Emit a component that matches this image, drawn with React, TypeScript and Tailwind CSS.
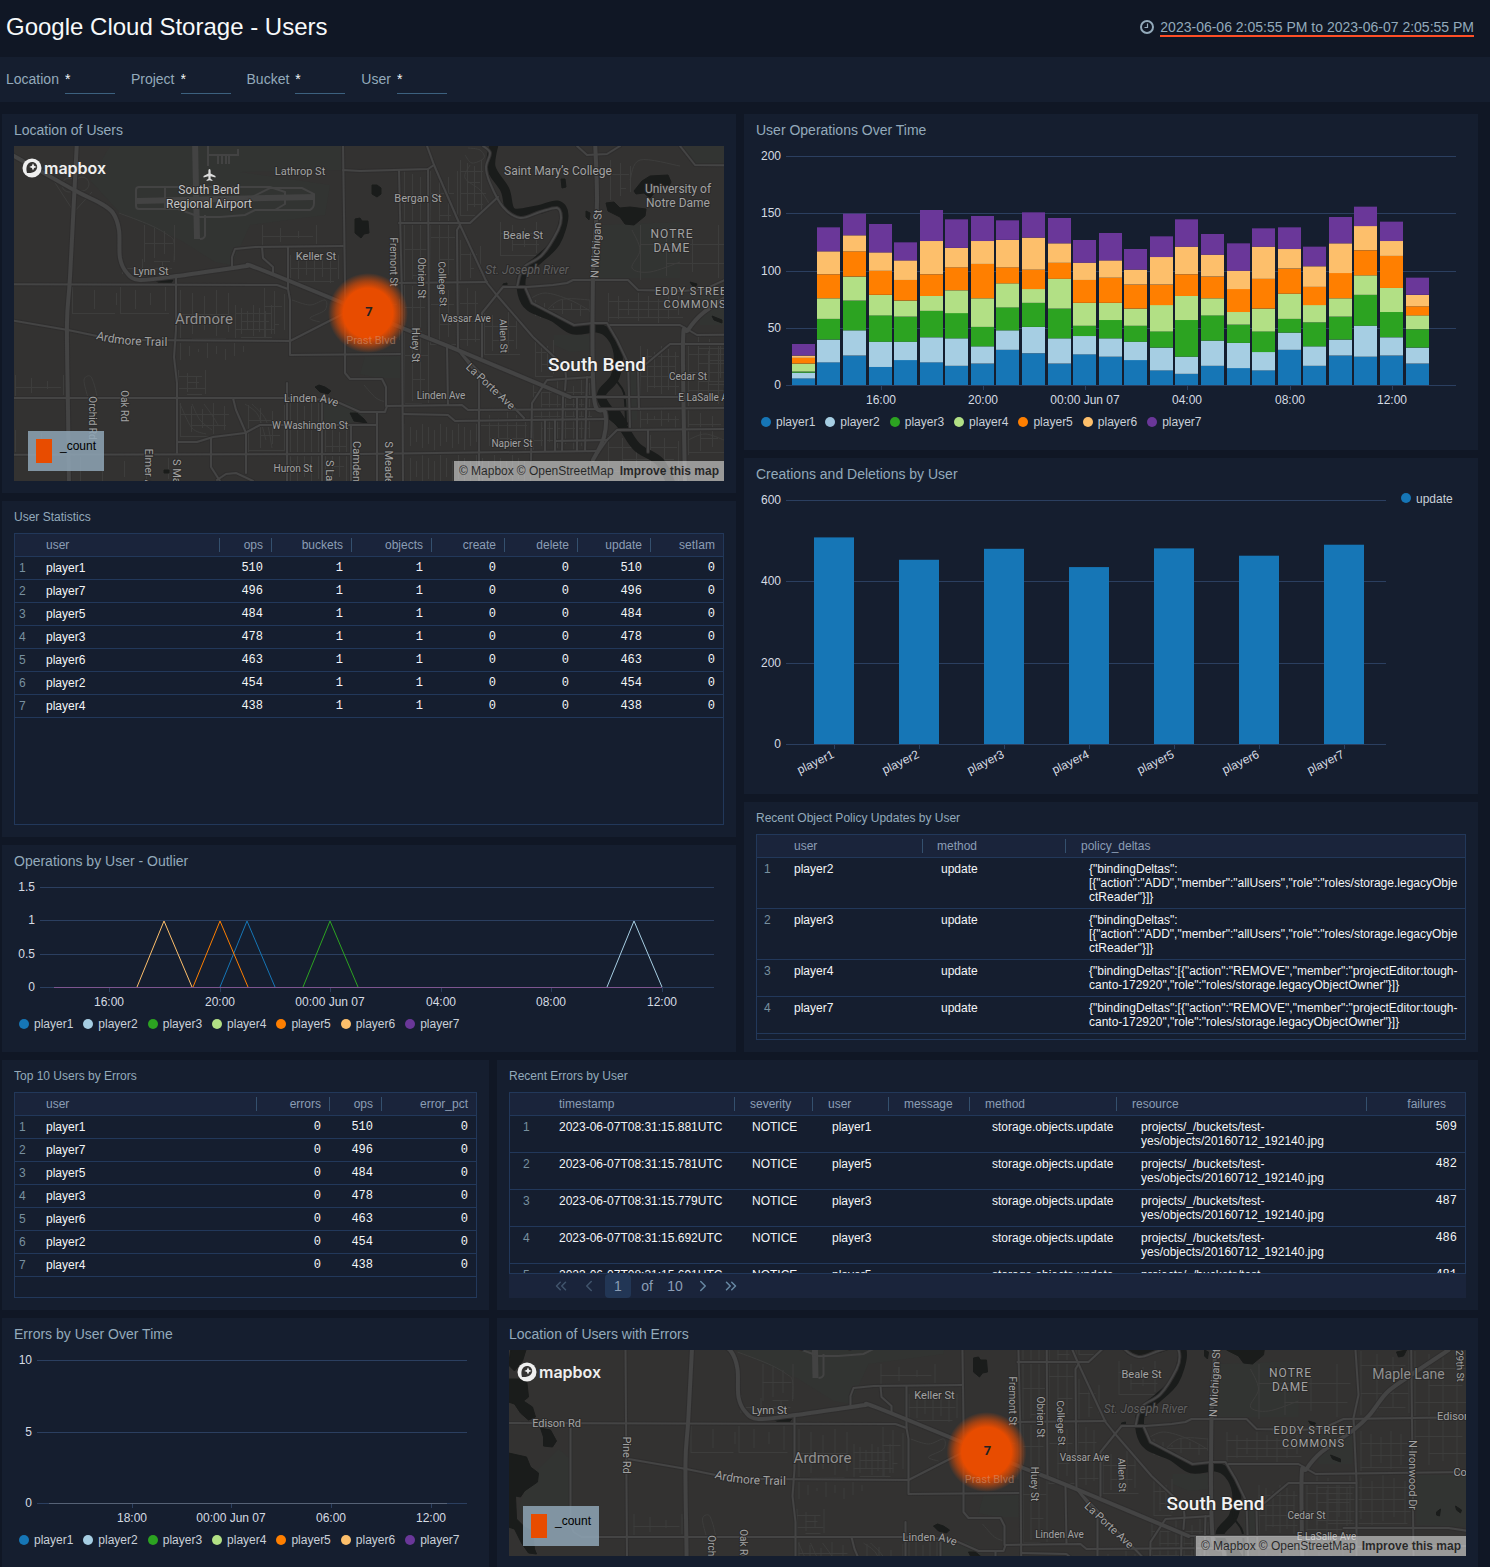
import type { ReactNode } from "react";
import { ChevronLeft, ChevronRight, ChevronsLeft, ChevronsRight } from "lucide-react";

const PLAYERS = [
  { name: "player1", color: "#1676b6" },
  { name: "player2", color: "#a6cee3" },
  { name: "player3", color: "#2ca321" },
  { name: "player4", color: "#b2e085" },
  { name: "player5", color: "#ff7f00" },
  { name: "player6", color: "#fdbf6b" },
  { name: "player7", color: "#6a3799" },
];

const GRID = "#2b3f60";
const AXIS_TEXT = "#d5dbe3";

/* ---------- shared pieces ---------- */

function Panel({ title, small, last, children }: { title: string; small?: boolean; last?: boolean; children: ReactNode }) {
  return (
    <section className={`min-w-0 bg-[#151e2f] px-3 ${last ? "pb-[11px]" : "pb-3"}`}>
      <h2 className={`truncate text-[#93aabb] ${small ? "text-xs leading-8" : "text-sm leading-8"}`}>{title}</h2>
      {children}
    </section>
  );
}

function Legend() {
  return (
    <ul className="mb-1 flex h-6 items-center gap-[10px] overflow-hidden pl-[5px] text-xs text-[#c9d0d8]">
      {PLAYERS.map((p) => (
        <li key={p.name} className="flex items-center gap-[5px]">
          <span className="size-[10px] rounded-full" style={{ backgroundColor: p.color }} />
          {p.name}
        </li>
      ))}
    </ul>
  );
}

type Column = { label: string; width?: string; head?: string; cell?: string; numeric?: boolean };

function DataTable({ columns, rows, indexWidth, indexCell, height }: {
  columns: Column[];
  rows: string[][];
  indexWidth: string;
  indexCell: string;
  height: string;
}) {
  return (
    <div className={`overflow-auto border border-[#22385a] [scrollbar-width:none] ${height}`}>
      <table className="w-full table-fixed border-separate border-spacing-0 text-xs leading-[14px]">
        <colgroup>
          <col className={indexWidth} />
          {columns.map((c) => (
            <col key={c.label} className={c.width} />
          ))}
        </colgroup>
        <thead>
          <tr className="bg-[#1a243b] text-[#8b9db5]">
            <th className="border-b border-[#22385a] py-1" aria-label="row" />
            {columns.map((c, i) => (
              <th
                key={c.label}
                scope="col"
                className={`relative border-b border-[#22385a] py-1 font-normal ${c.numeric ? "text-right" : "text-left"} ${c.head ?? "px-2"} ${
                  i < columns.length - 1 ? "after:absolute after:inset-y-1 after:right-0 after:w-px after:bg-[#34506e]" : ""
                }`}
              >
                {c.label}
              </th>
            ))}
          </tr>
        </thead>
        <tbody>
          {rows.map((r, ri) => (
            <tr key={ri} className="align-top text-[#f3f5f7]">
              <td className={`border-b border-[#22385a] py-1 text-[#78909f] ${indexCell}`}>{ri + 1}</td>
              {r.map((v, ci) => (
                <td
                  key={ci}
                  className={`border-b border-[#22385a] py-1 break-words ${
                    columns[ci].numeric ? "text-right font-['Liberation_Mono',monospace]" : ""
                  } ${columns[ci].cell ?? "px-2"}`}
                >
                  {v}
                </td>
              ))}
            </tr>
          ))}
        </tbody>
      </table>
    </div>
  );
}

/* ---------- map ---------- */

type Pt = [number, number];

const toPoints = (pts: Pt[]) => pts.map((p) => p.join(",")).join(" ");

function smooth(pts: Pt[]) {
  let d = `M${pts[0][0]},${pts[0][1]}`;
  for (let i = 0; i < pts.length - 1; i++) {
    const a = pts[Math.max(i - 1, 0)];
    const b = pts[i];
    const c = pts[i + 1];
    const e = pts[Math.min(i + 2, pts.length - 1)];
    d += `C${b[0] + (c[0] - a[0]) / 6},${b[1] + (c[1] - a[1]) / 6} ${c[0] - (e[0] - b[0]) / 6},${c[1] - (e[1] - b[1]) / 6} ${c[0]},${c[1]}`;
  }
  return d;
}

const HIGHWAYS: Pt[][] = [
  [[77, 140], [76, 160], [70, 277], [67, 323], [68, 410], [69, 485]],
  [[0, 148], [14, 156], [74, 190], [100, 203], [113, 213], [119, 230], [120, 258], [127, 273], [140, 280], [177, 276], [233, 268], [247, 266], [257, 268], [343, 303], [400, 327], [460, 351], [570, 397]],
  [[595, 140], [597, 203], [593, 277], [594, 397], [605, 412], [604, 437], [593, 460]],
  [[830, 211], [788, 239], [768, 254], [751, 276], [735, 291], [703, 313], [688, 330], [683, 343], [685, 485]],
];

const ROADS: Pt[][] = [
  [[-110, 284], [277, 285], [288, 289], [290, 300], [290, 355], [400, 354]],
  [[10, 320], [68, 330], [97, 336], [130, 340], [290, 341], [343, 314]],
  [[176, 276], [176, 330], [174, 357], [177, 383], [177, 453]],
  [[-48, 289], [-48, 385], [-45, 393], [-37, 398], [283, 398], [333, 400], [360, 412], [385, 412], [387, 406], [462, 405], [468, 410], [605, 409], [850, 407]],
  [[570, 397], [684, 397]],
  [[-110, 455], [360, 454], [598, 451]],
  [[343, 146], [345, 283], [345, 373], [350, 379], [382, 379], [386, 387], [386, 406]],
  [[343, 246], [255, 247], [235, 249], [232, 257], [232, 267]],
  [[262, 247], [263, 258], [273, 267], [273, 273]],
  [[288, 247], [288, 289]],
  [[343, 170], [360, 171], [428, 169], [434, 165]],
  [[427, 146], [434, 165], [460, 225], [487, 283], [495, 293], [533, 337], [565, 367], [566, 377], [565, 390]],
  [[399, 171], [402, 297], [403, 481]],
  [[428, 169], [429, 337]],
  [[460, 225], [457, 230], [458, 350], [479, 377], [479, 481]],
  [[399, 223], [470, 223], [498, 197]],
  [[396, 283], [487, 282]],
  [[447, 347], [448, 405]],
  [[458, 350], [524, 418]],
  [[482, 357], [482, 313], [503, 287], [527, 287], [553, 285], [567, 283], [573, 280], [628, 280], [638, 290], [683, 291], [705, 289], [725, 280], [871, 278]],
  [[403, 414], [448, 415], [455, 421], [605, 419]],
  [[577, 146], [587, 155], [607, 154], [620, 146]],
  [[680, 146], [695, 165], [850, 166]],
  [[525, 287], [532, 303], [553, 314], [574, 325], [593, 323], [607, 323], [617, 340], [628, 363], [630, 427]],
  [[610, 325], [680, 325], [697, 335], [850, 333]],
  [[737, 211], [740, 256], [735, 279], [738, 343], [738, 417]],
  [[792, 146], [795, 417]],
  [[646, 364], [670, 344], [738, 344]],
  [[725, 389], [830, 389], [850, 392]],
  [[593, 460], [607, 440], [617, 430], [724, 429]],
  [[638, 370], [639, 409]],
  [[648, 430], [648, 452]],
  [[531, 460], [532, 403], [547, 380], [593, 377]],
  [[545, 420], [545, 451]],
  [[555, 420], [555, 451]],
  [[563, 397], [562, 451]],
  [[577, 397], [577, 451]],
  [[587, 377], [585, 451]],
  [[555, 441], [607, 440]],
  [[7, 211], [9, 485]],
  [[287, 383], [287, 485]],
  [[322, 403], [322, 485]],
  [[351, 485], [351, 425]],
  [[377, 412], [377, 481]],
  [[177, 442], [197, 442], [213, 437], [245, 433], [260, 425], [377, 425]],
  [[233, 398], [236, 410], [246, 433], [246, 473]],
  [[211, 438], [211, 467], [220, 481]],
  [[217, 480], [226, 474], [236, 473], [253, 481]],
];

const BANK_ROAD: Pt[] = [[483, 146], [490, 153], [486, 167], [490, 183], [503, 207], [520, 218], [540, 212], [557, 208], [561, 217], [558, 230], [542, 255], [523, 268], [517, 287]];

const RIVER: Pt[] = [[495, 140], [491, 167], [505, 190], [512, 212], [537, 210], [557, 205], [564, 216], [556, 242], [538, 260], [523, 273], [522, 293], [530, 307], [553, 317], [573, 330], [597, 328], [610, 335], [618, 353], [615, 377], [602, 393], [605, 405], [623, 427], [637, 447], [660, 462], [672, 486]];

const LAKES: Pt[][] = [
  [[355, 219], [360, 218], [362, 221], [368, 221], [369, 233], [364, 234], [361, 238], [355, 233]],
  [[372, 185], [377, 185], [381, 188], [381, 194], [377, 197], [372, 194]],
  [[634, 191], [642, 181], [650, 176], [668, 175], [671, 182], [668, 188], [655, 192], [650, 198], [644, 193], [636, 194]],
  [[606, 203], [614, 202], [620, 208], [630, 207], [646, 209], [645, 216], [634, 225], [625, 224], [620, 217], [608, 211]],
  [[561, 179], [565, 179], [566, 187], [562, 188]],
  [[586, 211], [590, 213], [589, 220], [586, 217]],
  [[315, 387], [319, 385], [325, 387], [331, 391], [328, 394], [320, 392]],
  [[350, 413], [357, 413], [364, 419], [367, 423], [354, 421]],
  [[156, 281], [173, 280], [171, 283], [160, 283]],
  [[712, 316], [722, 320], [722, 323], [714, 320]],
  [[690, 282], [697, 284], [695, 288], [692, 285]],
  [[503, 284], [507, 283], [507, 286], [503, 286]],
  [[164, 470], [169, 470], [169, 473], [164, 473]],
  [[607, 408], [619, 410], [628, 424], [620, 428], [608, 418]],
  [[-107, 206], [-91, 206], [-96, 222], [-104, 232], [-110, 226]],
  [[-110, 240], [-92, 240], [-90, 258], [-95, 262], [-86, 268], [-83, 278], [-90, 281], [-98, 274], [-104, 265], [-110, 263]],
  [[-78, 289], [-68, 291], [-62, 302], [-66, 308], [-75, 307], [-75, 298]],
  [[-110, 314], [-92, 318], [-88, 328], [-80, 334], [-81, 343], [-94, 352], [-98, 358], [-103, 357], [-102, 380], [-94, 388], [-86, 392], [-84, 410], [-82, 415], [-90, 414], [-97, 404], [-104, 390], [-110, 388]],
  [[778, 213], [788, 211], [785, 217], [780, 218]],
  [[818, 373], [822, 370], [821, 377], [818, 376]],
  [[837, 367], [843, 371], [842, 374], [838, 371]],
];

const PARKS: Pt[][] = [
  [[110, 146], [343, 146], [343, 170], [240, 172], [330, 185], [325, 215], [250, 225], [232, 265], [215, 262], [180, 240], [120, 213], [90, 180]],
  [[600, 225], [680, 222], [680, 278], [597, 278]],
  [[680, 146], [724, 146], [724, 165], [695, 165]],
  [[554, 335], [592, 335], [592, 350], [570, 352], [554, 345]],
  [[626, 372], [637, 372], [637, 420], [626, 420]],
  [[365, 356], [400, 356], [400, 378], [378, 378], [360, 374]],
  [[-90, 340], [-60, 310], [-48, 320], [-48, 385], [-80, 395], [-100, 370]],
  [[700, 292], [734, 295], [734, 325], [700, 325]],
  [[798, 336], [850, 336], [850, 388], [798, 386]],
  [[322, 403], [350, 403], [366, 414], [350, 424], [322, 424]],
];

/* blocks of side streets: x0, y0, x1, y1, column step, row step */
const BLOCKS: [number, number, number, number, number, number][] = [
  [404, 171, 427, 283, 8, 26],
  [404, 283, 428, 405, 8, 24],
  [430, 171, 457, 283, 9, 22],
  [430, 284, 457, 345, 9, 20],
  [459, 285, 481, 350, 8, 18],
  [460, 240, 480, 282, 10, 14],
  [484, 312, 520, 355, 8, 14],
  [535, 300, 592, 316, 9, 9],
  [535, 340, 553, 376, 6, 12],
  [533, 380, 592, 450, 8, 12],
  [608, 293, 683, 323, 10, 8],
  [640, 346, 682, 396, 7, 10],
  [640, 410, 682, 428, 7, 9],
  [688, 345, 737, 406, 10, 9],
  [688, 410, 724, 455, 12, 14],
  [698, 336, 792, 386, 11, 12],
  [742, 292, 792, 332, 10, 12],
  [742, 212, 790, 276, 16, 14],
  [796, 212, 850, 330, 14, 17],
  [404, 424, 478, 450, 6, 40],
  [404, 455, 530, 485, 6, 40],
  [480, 412, 530, 450, 9, 13],
  [290, 400, 320, 485, 7, 27],
  [325, 426, 350, 485, 7, 20],
  [248, 405, 286, 452, 12, 15],
  [178, 370, 205, 396, 9, 6],
  [180, 403, 232, 436, 11, 11],
  [120, 287, 172, 313, 15, 26],
  [72, 287, 118, 313, 22, 26],
  [180, 290, 232, 338, 12, 24],
  [235, 305, 275, 338, 6, 8],
  [264, 288, 285, 338, 10, 18],
  [290, 255, 340, 283, 8, 13],
  [262, 225, 316, 246, 18, 11],
  [144, 225, 176, 262, 10, 18],
  [122, 256, 175, 274, 20, 12],
  [15, 375, 64, 397, 16, 12],
  [180, 343, 250, 360, 9, 18],
  [349, 293, 400, 340, 10, 11],
  [80, 455, 176, 485, 22, 40],
  [608, 435, 680, 485, 14, 12],
  [460, 160, 486, 215, 7, 11],
  [500, 222, 545, 255, 12, 11],
  [610, 160, 632, 200, 10, 14],
  [640, 225, 735, 280, 26, 19],
  [15, 430, 66, 452, 26, 30],
];

const TWISTS: Pt[][] = [
  [[119, 213], [150, 225], [168, 235], [174, 242], [174, 262]],
  [[465, 155], [472, 163], [484, 158], [480, 150], [468, 148]],
  [[470, 165], [465, 178], [480, 190], [490, 205]],
  [[180, 404], [192, 428], [206, 434]],
  [[192, 404], [200, 420], [212, 430]],
  [[204, 404], [212, 415], [218, 425]],
  [[245, 404], [258, 415], [266, 440]],
  [[252, 404], [266, 420], [272, 448]],
  [[292, 300], [310, 305], [325, 300], [325, 310], [310, 318], [320, 322]],
  [[540, 318], [560, 300], [590, 300]],
  [[528, 300], [545, 293], [570, 300], [592, 312]],
  [[630, 180], [640, 160], [680, 166]],
  [[632, 230], [640, 250], [632, 268], [650, 272], [680, 262]],
  [[688, 440], [705, 434], [724, 440]],
  [[364, 385], [376, 398], [386, 402]],
  [[88, 398], [84, 380], [90, 376], [94, 384], [97, 396]],
];

type Label = { t: string; x: number; y: number; r?: number; s?: number; c?: string; ls?: string; it?: boolean };

const LABELS: Label[] = [
  { t: "South Bend", x: 209, y: 194, s: 12, c: "#c4c4c4" },
  { t: "Regional Airport", x: 209, y: 208, s: 12, c: "#c4c4c4" },
  { t: "Lathrop St", x: 300, y: 175 },
  { t: "Saint Mary’s College", x: 558, y: 175, s: 12 },
  { t: "University of", x: 678, y: 193, s: 12 },
  { t: "Notre Dame", x: 678, y: 207, s: 12 },
  { t: "NOTRE", x: 672, y: 238, s: 12, ls: "1px" },
  { t: "DAME", x: 672, y: 252, s: 12, ls: "1px" },
  { t: "EDDY STREET", x: 695, y: 295, s: 11, ls: "1px" },
  { t: "COMMONS", x: 695, y: 308, s: 11, ls: "1px" },
  { t: "Bergan St", x: 418, y: 202 },
  { t: "Beale St", x: 523, y: 239 },
  { t: "Keller St", x: 316, y: 260 },
  { t: "Lynn St", x: 151, y: 275 },
  { t: "Ardmore", x: 204, y: 324, s: 15, c: "#909090" },
  { t: "Vassar Ave", x: 466, y: 322, s: 10 },
  { t: "Linden Ave", x: 441, y: 399, s: 10 },
  { t: "Napier St", x: 512, y: 447, s: 10 },
  { t: "Huron St", x: 293, y: 472, s: 10 },
  { t: "W Washington St", x: 310, y: 429, s: 10 },
  { t: "Cedar St", x: 688, y: 380, s: 10 },
  { t: "E LaSalle Ave", x: 708, y: 401, s: 10 },
  { t: "Edison Rd", x: -62, y: 288, s: 11 },
  { t: "Edison Rd", x: 843, y: 281, s: 11 },
  { t: "Corby Blvd", x: 861, y: 337, s: 11 },
  { t: "Maple Lane", x: 790, y: 240, s: 14, c: "#909090" },
  { t: "St. Joseph River", x: 527, y: 274, s: 12, c: "#5f5f5f", it: true },
  { t: "Fremont St", x: 390, y: 262, r: 90, s: 10 },
  { t: "Obrien St", x: 418, y: 278, r: 90, s: 10 },
  { t: "College St", x: 439, y: 284, r: 88, s: 10 },
  { t: "Allen St", x: 500, y: 336, r: 88, s: 10 },
  { t: "Huey St", x: 412, y: 345, r: 90, s: 10 },
  { t: "N Michigan St", x: 600, y: 244, r: -87, s: 11 },
  { t: "La Porte Ave", x: 488, y: 389, r: 43, s: 11 },
  { t: "Orchid Rd", x: 89, y: 418, r: 90, s: 10 },
  { t: "Oak Rd", x: 121, y: 406, r: 90, s: 10 },
  { t: "Elmer Ave", x: 145, y: 473, r: 90 },
  { t: "S Mayflower Rd", x: 173, y: 497, r: 90 },
  { t: "S Lafayette St", x: 326, y: 494, r: 90 },
  { t: "Camden St", x: 353, y: 468, r: 90 },
  { t: "S Meade St", x: 385, y: 469, r: 90 },
  { t: "Pine Rd", x: 4, y: 316, r: 90, s: 11 },
  { t: "N Ironwood Dr", x: 790, y: 336, r: 90, s: 11 },
  { t: "29th St", x: 838, y: 227, r: 88, s: 10 },
];

function StreetMap({ viewBox, height }: { viewBox: string; height: string }) {
  return (
    <div className={`relative overflow-hidden bg-[#333231] ${height}`}>
      <svg viewBox={viewBox} preserveAspectRatio="xMidYMid slice" className="size-full font-[Roboto,sans-serif]" role="img" aria-label="Street map of South Bend">
        <defs>
          <radialGradient id="heat">
            <stop offset="0" stopColor="#e84c00" />
            <stop offset="0.62" stopColor="#e84c00" />
            <stop offset="0.8" stopColor="#e84c00" stopOpacity="0.6" />
            <stop offset="1" stopColor="#e84c00" stopOpacity="0" />
          </radialGradient>
        </defs>
        {PARKS.map((p, i) => (
          <polygon key={i} points={toPoints(p)} fill="#323432" />
        ))}
        <g stroke="#3d3d3c" strokeWidth="1" fill="none">
          {BLOCKS.map(([x0, y0, x1, y1, dx, dy], i) => {
            let d = "";
            for (let x = x0, n = 0; x <= x1; x += dx, n++) d += `M${x + 0.5},${y0 + (n % 3) * 3}V${y1 - ((n * 2) % 5) * 2}`;
            for (let y = y0 + dy, n = 0; y <= y1; y += dy, n++) d += `M${x0 + (n % 2) * dx},${y + 0.5}H${x1 - ((n + 1) % 3) * 3}`;
            return <path key={i} d={d} />;
          })}
          {TWISTS.map((p, i) => (
            <path key={i} d={smooth(p)} />
          ))}
          <circle cx="69" cy="185" r="7" />
          <circle cx="82" cy="184" r="7" />
          <path d="M50 175L74 212L92 192" />
        </g>
        <g fill="none" stroke="#434343">
          <path d="M195 140L197 239" strokeWidth="6" />
          <path d="M137 201L314 197" strokeWidth="6" />
          <path d="M165 187H139Q136 187 136 190V206Q136 209 139 209H178L200 217H220L245 215L255 210H310Q314 208 314 203V194L302 188H270L240 203M165 187H270L285 192V204L275 210M165 187V209M205 215V236Q204 239 200 239M208 146V166M208 155H238V149M218 155V164M222 155V164M226 155V164M229 155V164" strokeWidth="2" />
        </g>
        <path d={smooth(RIVER)} fill="none" stroke="#1a1c1b" strokeWidth="9" strokeLinejoin="round" />
        <path d={smooth([[612, 338], [617, 350], [615, 377], [624, 393], [626, 425]])} fill="none" stroke="#1a1c1b" strokeWidth="2" />
        {LAKES.map((p, i) => (
          <polygon key={i} points={toPoints(p)} fill="#1a1c1b" stroke="#1a1c1b" strokeLinejoin="round" />
        ))}
        <g fill="none" strokeLinejoin="round" strokeLinecap="round">
          <g stroke="#2f2e2e">
            {ROADS.map((p, i) => (
              <polyline key={i} points={toPoints(p)} strokeWidth="4" />
            ))}
            {HIGHWAYS.map((p, i) => (
              <path key={i} d={smooth(p)} strokeWidth="6" />
            ))}
            <path d={smooth(BANK_ROAD)} strokeWidth="4" />
          </g>
          <g stroke="#444444">
            {ROADS.map((p, i) => (
              <polyline key={i} points={toPoints(p)} strokeWidth="2" />
            ))}
            {HIGHWAYS.map((p, i) => (
              <path key={i} d={smooth(p)} strokeWidth="4" />
            ))}
            <path d={smooth(BANK_ROAD)} strokeWidth="2" />
          </g>
        </g>
        <path
          d="M209.500 169c.7 0 1.100 .9 1.100 2v2.500l4.900 2.500v1.400l-4.900-1.200v2.500l1.800 1.300v1l-2.900-.7-2.900 .7v-1l1.800-1.300v-2.500l-4.900 1.200v-1.400l4.900-2.500v-2.500c0-1.100 .4-2 1.100-2z"
          fill="#dcdcdc"
        />
        <g textAnchor="middle" stroke="#2b2a2a" strokeWidth="2" strokeLinejoin="round" style={{ paintOrder: "stroke" }}>
          {LABELS.map((l, i) => (
            <text
              key={i}
              x={l.x}
              y={l.y}
              fontSize={l.s ?? 11}
              fill={l.c ?? "#a2a2a2"}
              fontStyle={l.it ? "italic" : undefined}
              style={l.ls ? { letterSpacing: l.ls } : undefined}
              transform={l.r ? `rotate(${l.r} ${l.x} ${l.y})` : undefined}
            >
              {l.t}
            </text>
          ))}
          <path id="trail" d="M96 339Q118 346 168 346" fill="none" stroke="none" />
          <text fontSize="12" fill="#a2a2a2" textAnchor="start">
            <textPath href="#trail">Ardmore Trail</textPath>
          </text>
          <path id="linden" d="M284 402H318Q328 402 340 409" fill="none" stroke="none" />
          <text fontSize="11" fill="#a2a2a2" textAnchor="start">
            <textPath href="#linden">Linden Ave</textPath>
          </text>
          <text x="597" y="371" fontSize="19" fontWeight="500" fill="#f2f2f2">
            South Bend
          </text>
        </g>
        <circle cx="368" cy="313" r="40" fill="url(#heat)" />
        <text x="371" y="344" fontSize="11" textAnchor="middle" fill="#d9a183" fillOpacity="0.5">
          Prast Blvd
        </text>
        <text x="369" y="316" fontSize="13" fontWeight="700" textAnchor="middle" fill="#222222">
          7
        </text>
      </svg>

      <a href="#mapbox" className="absolute top-3 left-2 flex items-center gap-[2px] font-[Inter,sans-serif] text-base leading-[18px] font-semibold text-[#efefef]" aria-label="Mapbox homepage">
        <svg viewBox="0 0 20 20" className="size-5" aria-hidden="true">
          <circle cx="10" cy="10" r="9.500" fill="#efefef" />
          <path d="M5 15c-1.300-4.500-.4-8.200 2-10 2.300-1.600 5.300-1.200 7 .8 1.900 2.300 1.500 5.300-.7 7.200-2.100 1.800-5.100 2.300-8.300 2z" fill="#333231" />
          <path d="M11 5.200l1.100 2.600 2.600 1.100-2.600 1.100L11 12.600 9.900 10 7.300 8.900l2.600-1.100z" fill="#efefef" />
        </svg>
        mapbox
      </a>

      <div className="absolute bottom-[10px] left-[14px] flex h-10 w-[76px] items-start gap-2 bg-[#8fa6b6]/85 p-2 text-xs leading-[14px] text-black">
        <span className="h-6 w-4 bg-[#e84c00]" />
        <span>_count</span>
      </div>

      <div className="absolute right-0 bottom-0 flex h-5 items-center gap-[3px] bg-[#fff]/50 px-[5px] text-xs whitespace-nowrap text-black/75">
        <a href="#mapbox-about">© Mapbox</a>
        <a href="#openstreetmap">© OpenStreetMap</a>
        <a href="#improve" className="ml-[3px] font-bold">
          Improve this map
        </a>
      </div>
    </div>
  );
}

/* ---------- charts ---------- */

const HOURLY = [
  [6, 11, 12, 19, 24, 26, 36],
  [20, 40, 58, 76, 97, 117, 138],
  [26, 48, 74, 95, 117, 131, 150],
  [16, 38, 61, 79, 100, 116, 141],
  [22, 38, 60, 74, 92, 109, 125],
  [20, 42, 65, 78, 97, 126, 153],
  [17, 41, 63, 83, 103, 120, 145],
  [19, 34, 51, 76, 106, 126, 148],
  [31, 48, 68, 89, 103, 127, 144],
  [28, 51, 72, 84, 101, 129, 151],
  [19, 41, 67, 93, 107, 124, 146],
  [27, 43, 52, 72, 92, 107, 127],
  [25, 41, 57, 72, 94, 109, 133],
  [22, 38, 52, 67, 88, 101, 119],
  [13, 33, 47, 70, 88, 112, 130],
  [10, 25, 57, 78, 97, 121, 145],
  [17, 39, 61, 76, 95, 114, 132],
  [15, 37, 53, 64, 84, 100, 124],
  [13, 29, 47, 67, 93, 121, 137],
  [31, 46, 58, 80, 102, 119, 138],
  [17, 34, 55, 70, 86, 104, 121],
  [26, 40, 60, 76, 98, 124, 147],
  [25, 52, 79, 96, 118, 139, 156],
  [26, 42, 64, 85, 113, 126, 143],
  [19, 33, 49, 61, 69, 79, 94],
];

type Tick = [number, string];

function Axes({ x0, x1, rows, ticks, tickLabelY }: { x0: number; x1: number; rows: Tick[]; ticks: Tick[]; tickLabelY: number }) {
  const base = rows[rows.length - 1][0];
  return (
    <g fontSize="12" fill={AXIS_TEXT}>
      {rows.map(([y, label]) => (
        <g key={label}>
          <path d={`M${x0} ${y + 0.5}H${x1}`} stroke={GRID} />
          <text x={x0 - 5} y={y + 4} textAnchor="end">
            {label}
          </text>
        </g>
      ))}
      {ticks.map(([x, label]) => (
        <g key={label}>
          <path d={`M${x + 0.5} ${base + 1}v4`} stroke={GRID} />
          <text x={x} y={tickLabelY} textAnchor="middle">
            {label}
          </text>
        </g>
      ))}
    </g>
  );
}

function OperationsChart() {
  return (
    <svg viewBox="0 0 710 264" className="h-auto w-full" role="img" aria-label="User operations over time">
      <Axes
        x0={30}
        x1={700}
        rows={[[10, "200"], [67, "150"], [125, "100"], [182, "50"], [239, "0"]]}
        ticks={[[125, "16:00"], [227, "20:00"], [329, "00:00 Jun 07"], [431, "04:00"], [534, "08:00"], [636, "12:00"]]}
        tickLabelY={258}
      />
      {HOURLY.map((cum, i) => {
        const x = Math.floor(36.35 + 25.57 * i);
        return cum.map((v, k) => {
          const top = Math.round((239.3 - v * 1.145) * 3) / 3;
          const bottom = 239.3 - (k ? cum[k - 1] : 0) * 1.145;
          return <rect key={`${i}-${k}`} x={x} y={top} width="23" height={bottom - top} fill={PLAYERS[k].color} />;
        });
      })}
      <path d="M30 239.500H700" stroke={GRID} />
    </svg>
  );
}

const TOTALS = [508, 453, 480, 435, 481, 463, 490];

function CreationsChart() {
  return (
    <svg viewBox="0 0 710 292" className="h-auto w-full" role="img" aria-label="Creations and deletions by user">
      <Axes x0={30} x1={630} rows={[[10, "600"], [91, "400"], [173, "200"], [254, "0"]]} ticks={[]} tickLabelY={0} />
      {TOTALS.map((v, i) => {
        const x = 58 + i * 85;
        return (
          <g key={i}>
            <rect x={x} y={254 - v * 0.4067} width="40" height={v * 0.4067} fill="#1676b6" />
            <path d={`M${x + 20.5} 255v4`} stroke={GRID} />
            <text x={x + 21} y="267" fontSize="12" fill={AXIS_TEXT} textAnchor="end" transform={`rotate(-26 ${x + 21} 267)`}>
              {PLAYERS[i].name}
            </text>
          </g>
        );
      })}
      <circle cx="650" cy="8" r="5" fill="#1676b6" />
      <text x="660" y="13" fontSize="12" fill="#c9d0d8">
        update
      </text>
    </svg>
  );
}

function OutlierChart() {
  const peaks: [number, number][] = [[150, 5], [206, 4], [233, 0], [316, 2], [620, 1]];
  return (
    <svg viewBox="0 0 710 135" className="h-auto w-full" role="img" aria-label="Operations by user, outliers">
      <Axes
        x0={26}
        x1={700}
        rows={[[10, "1.5"], [43, "1"], [77, "0.5"], [110, "0"]]}
        ticks={[[95, "16:00"], [206, "20:00"], [316, "00:00 Jun 07"], [427, "04:00"], [537, "08:00"], [648, "12:00"]]}
        tickLabelY={129}
      />
      {[...peaks].reverse().map(([x, p]) => (
        <path key={x} d={`M${x - 27} 110L${x} 44L${x + 28} 110`} fill="none" stroke={PLAYERS[p].color} />
      ))}
      <path d="M40 110.500H648" stroke="#7d5590" />
    </svg>
  );
}

function ErrorsChart() {
  return (
    <svg viewBox="0 0 463 178" className="h-auto w-full" role="img" aria-label="Errors by user over time">
      <Axes
        x0={23}
        x1={453}
        rows={[[10, "10"], [82, "5"], [153, "0"]]}
        ticks={[[118, "18:00"], [217, "00:00 Jun 07"], [317, "06:00"], [417, "12:00"]]}
        tickLabelY={172}
      />
      <path d="M35 153.500H433" stroke="#566276" />
    </svg>
  );
}

/* ---------- data ---------- */

const RANKED: [string, string][] = [
  ["player1", "510"],
  ["player7", "496"],
  ["player5", "484"],
  ["player3", "478"],
  ["player6", "463"],
  ["player2", "454"],
  ["player4", "438"],
];

const numberColumn = (label: string, width: string): Column => ({ label, width, numeric: true, head: "pr-[9px]", cell: "pr-[9px]" });

const STAT_COLUMNS: Column[] = [
  { label: "user" },
  numberColumn("ops", "w-[52px]"),
  numberColumn("buckets", "w-[80px]"),
  numberColumn("objects", "w-[80px]"),
  numberColumn("create", "w-[73px]"),
  numberColumn("delete", "w-[73px]"),
  numberColumn("update", "w-[73px]"),
  { label: "setIam", width: "w-[72px]", numeric: true },
];

const TOP_COLUMNS: Column[] = [
  { label: "user" },
  numberColumn("errors", "w-[73px]"),
  numberColumn("ops", "w-[52px]"),
  { label: "error_pct", width: "w-[94px]", numeric: true },
];

const POLICY_COLUMNS: Column[] = [
  { label: "user", width: "w-[137px]" },
  { label: "method", width: "w-[143px]", head: "pl-[14px]", cell: "pl-[18px]" },
  { label: "policy_deltas", head: "pl-[15px]", cell: "pl-[23px] pr-1" },
];

const ADD = '{"bindingDeltas":[{"action":"ADD","member":"allUsers","role":"roles/storage.legacyObjectReader"}]}';
const REMOVE = '{"bindingDeltas":[{"action":"REMOVE","member":"projectEditor:tough-canto-172920","role":"roles/storage.legacyObjectOwner"}]}';

const POLICY_ROWS = [
  ["player2", "update", ADD],
  ["player3", "update", ADD],
  ["player4", "update", REMOVE],
  ["player7", "update", REMOVE],
];

const ERROR_COLUMNS: Column[] = [
  { label: "timestamp", width: "w-[184px]" },
  { label: "severity", width: "w-[78px]", head: "pl-[15px]", cell: "pl-[17px]" },
  { label: "user", width: "w-[76px]", head: "pl-[15px]", cell: "pl-[19px]" },
  { label: "message", width: "w-[81px]", head: "pl-[15px]" },
  { label: "method", width: "w-[147px]", head: "pl-[15px]", cell: "pl-[22px]" },
  { label: "resource", head: "pl-[15px]", cell: "pl-6 pr-8" },
  { label: "failures", width: "w-[98px]", numeric: true, head: "pr-[19px]" },
];

const RESOURCE = "projects/_/buckets/test-yes/objects/20160712_192140.jpg";

const ERROR_ROWS = [
  ["2023-06-07T08:31:15.881UTC", "player1", "509"],
  ["2023-06-07T08:31:15.781UTC", "player5", "482"],
  ["2023-06-07T08:31:15.779UTC", "player3", "487"],
  ["2023-06-07T08:31:15.692UTC", "player3", "486"],
  ["2023-06-07T08:31:15.691UTC", "player5", "481"],
].map(([time, user, failures]) => [time, "NOTICE", user, "", "storage.objects.update", RESOURCE, failures]);

const FILTERS = ["Location", "Project", "Bucket", "User"];

function Pager() {
  return (
    <nav className="flex h-6 items-center bg-[#1a243b] pl-[38px] text-sm text-[#8b9db5]" aria-label="Pages">
      <button type="button" disabled aria-label="First page" className="flex w-7 justify-center text-[#41546c]">
        <ChevronsLeft className="size-[18px]" strokeWidth={2} />
      </button>
      <button type="button" disabled aria-label="Previous page" className="flex w-7 justify-center text-[#41546c]">
        <ChevronLeft className="size-[18px]" strokeWidth={2} />
      </button>
      <button type="button" aria-current="page" className="mx-[2px] h-6 w-[26px] rounded-sm bg-[#223655]">
        1
      </button>
      <span className="w-7 text-center">of</span>
      <button type="button" className="w-7">
        10
      </button>
      <button type="button" aria-label="Next page" className="flex w-7 justify-center text-[#6788a3]">
        <ChevronRight className="size-[18px]" strokeWidth={2} />
      </button>
      <button type="button" aria-label="Last page" className="flex w-7 justify-center text-[#6788a3]">
        <ChevronsRight className="size-[18px]" strokeWidth={2} />
      </button>
    </nav>
  );
}

export default function App() {
  return (
    <div className="min-h-screen bg-[#101725] font-['Liberation_Sans',Arial,sans-serif]">
      <header className="flex h-[57px] items-center justify-between pr-4 pb-[3px] pl-[6px]">
        <h1 className="text-2xl text-[#f7f9fa]">Google Cloud Storage - Users</h1>
        <button type="button" className="flex items-center gap-[6px] text-sm leading-4 text-[#93aabb]">
          <svg viewBox="0 0 14 14" className="size-[14px]" fill="none" stroke="currentColor" aria-hidden="true">
            <circle cx="7" cy="7" r="6" strokeWidth="2" />
            <path d="M7.500 3.500V7.500H4.500" strokeWidth="1.200" />
          </svg>
          <span className="border-b-2 border-[#ff4e26] pt-[2px]">2023-06-06 2:05:55 PM to 2023-06-07 2:05:55 PM</span>
        </button>
      </header>

      <form className="flex h-[45px] items-start gap-4 bg-[#151e2f] pt-[7px] pl-[6px] text-sm">
        {FILTERS.map((f) => (
          <div key={f} className="flex gap-[6px] leading-[30px]">
            <label htmlFor={f} className="text-[#93aabb]">
              {f}
            </label>
            <input id={f} defaultValue="*" className="h-[30px] w-[50px] border-b border-[#3c617f] bg-transparent text-[#f3f5f7] outline-none" />
          </div>
        ))}
      </form>

      <main className="flex flex-col gap-2 pt-3 pr-3 pl-[2px]">
        <div className="grid grid-cols-2 items-start gap-2">
          <div className="flex min-w-0 flex-col gap-2">
            <Panel title="Location of Users">
              <StreetMap viewBox="14 146 710 335" height="h-[335px]" />
            </Panel>
            <Panel title="User Statistics" small>
              <DataTable
                columns={STAT_COLUMNS}
                rows={RANKED.map(([u, n]) => [u, n, "1", "1", "0", "0", n, "0"])}
                indexWidth="w-[23px]"
                indexCell="pl-1"
                height="h-[292px]"
              />
            </Panel>
            <Panel title="Operations by User - Outlier">
              <OutlierChart />
              <Legend />
            </Panel>
          </div>
          <div className="flex min-w-0 flex-col gap-2">
            <Panel title="User Operations Over Time">
              <OperationsChart />
              <Legend />
            </Panel>
            <Panel title="Creations and Deletions by User">
              <CreationsChart />
            </Panel>
            <Panel title="Recent Object Policy Updates by User" small>
              <DataTable columns={POLICY_COLUMNS} rows={POLICY_ROWS} indexWidth="w-[29px]" indexCell="pl-[7px]" height="h-[206px]" />
            </Panel>
          </div>
        </div>

        <div className="grid grid-cols-[487fr_981fr] gap-2">
          <Panel title="Top 10 Users by Errors" small>
            <DataTable columns={TOP_COLUMNS} rows={RANKED.map(([u, n]) => [u, "0", n, "0"])} indexWidth="w-[23px]" indexCell="pl-1" height="h-[206px]" />
          </Panel>
          <Panel title="Recent Errors by User" small>
            <DataTable columns={ERROR_COLUMNS} rows={ERROR_ROWS} indexWidth="w-[41px]" indexCell="pl-[13px]" height="h-[182px]" />
            <Pager />
          </Panel>
          <Panel title="Errors by User Over Time" last>
            <ErrorsChart />
            <Legend />
          </Panel>
          <Panel title="Location of Users with Errors" last>
            <StreetMap viewBox="-109.500 211 957 206" height="h-[206px]" />
          </Panel>
        </div>
      </main>
    </div>
  );
}
